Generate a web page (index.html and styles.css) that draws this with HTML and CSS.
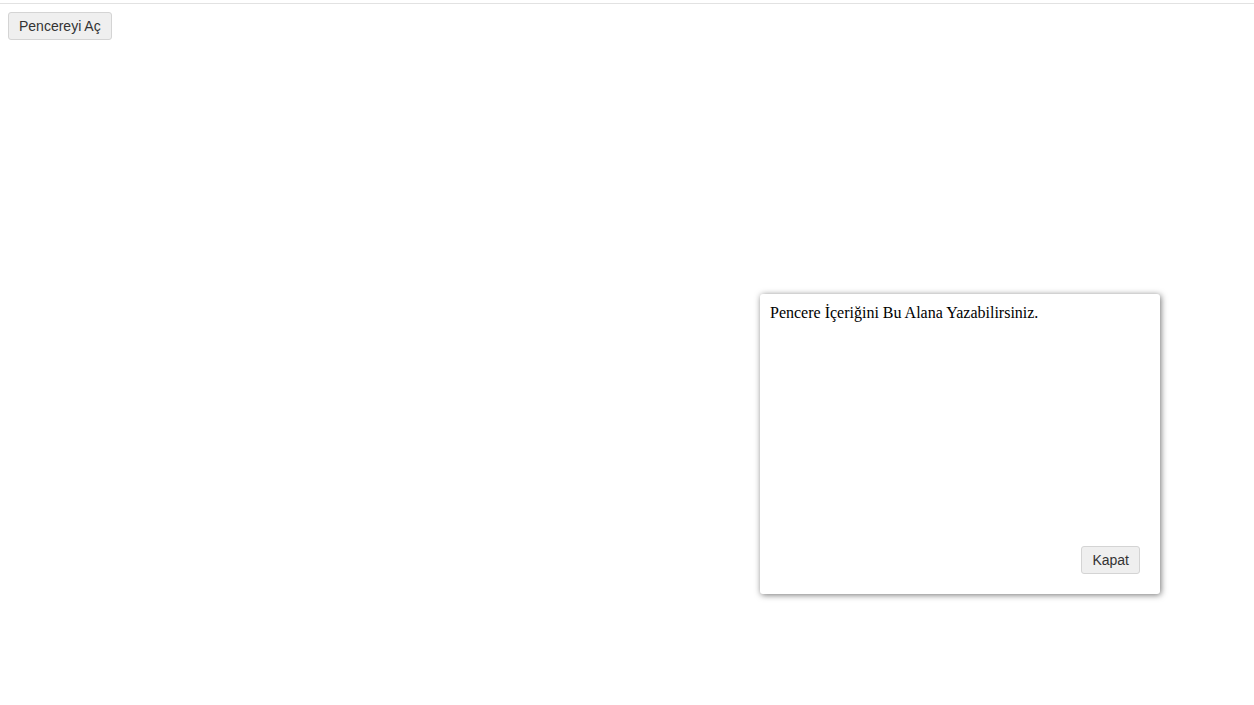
FILE: index.html
```html
<!DOCTYPE html>
<html lang="tr">
<head>
<meta charset="utf-8">
<title>Pencere</title>
<link rel="stylesheet" href="styles.css">
</head>
<body>
<div class="topline"></div>
<div class="page">
  <button class="btn">Pencereyi Aç</button>
</div>
<div class="modal">
  <p class="modal-text">Pencere İçeriğini Bu Alana Yazabilirsiniz.</p>
  <div class="modal-footer">
    <button class="btn">Kapat</button>
  </div>
</div>
</body>
</html>
```

FILE: styles.css
```css
html, body {
  margin: 0;
  padding: 0;
  background: #fff;
}
body {
  font-family: "Liberation Serif", "Times New Roman", serif;
  font-size: 16px;
  color: #000;
}
.topline {
  margin-top: 3px;
  height: 1px;
  background: #e2e2e2;
}
.page {
  padding: 8px;
}
.btn {
  font-family: "Liberation Sans", Arial, sans-serif;
  font-size: 14px;
  color: #333;
  background: #efefef;
  border: 1px solid #d4d4d4;
  border-radius: 3px;
  height: 28px;
  padding: 0 10px;
  line-height: 26px;
  margin: 0;
}
.modal {
  position: absolute;
  left: 760px;
  top: 294px;
  width: 400px;
  height: 300px;
  box-sizing: border-box;
  padding: 10px;
  background: #fff;
  border-radius: 3px;
  box-shadow: 1px 1px 6px rgba(0, 0, 0, 0.55);
  display: flex;
  flex-direction: column;
}
.modal-text {
  margin: 0;
  line-height: 18px;
}
.modal-footer {
  margin-top: auto;
  display: flex;
  justify-content: flex-end;
  padding: 0 10px 10px 0;
}
```
